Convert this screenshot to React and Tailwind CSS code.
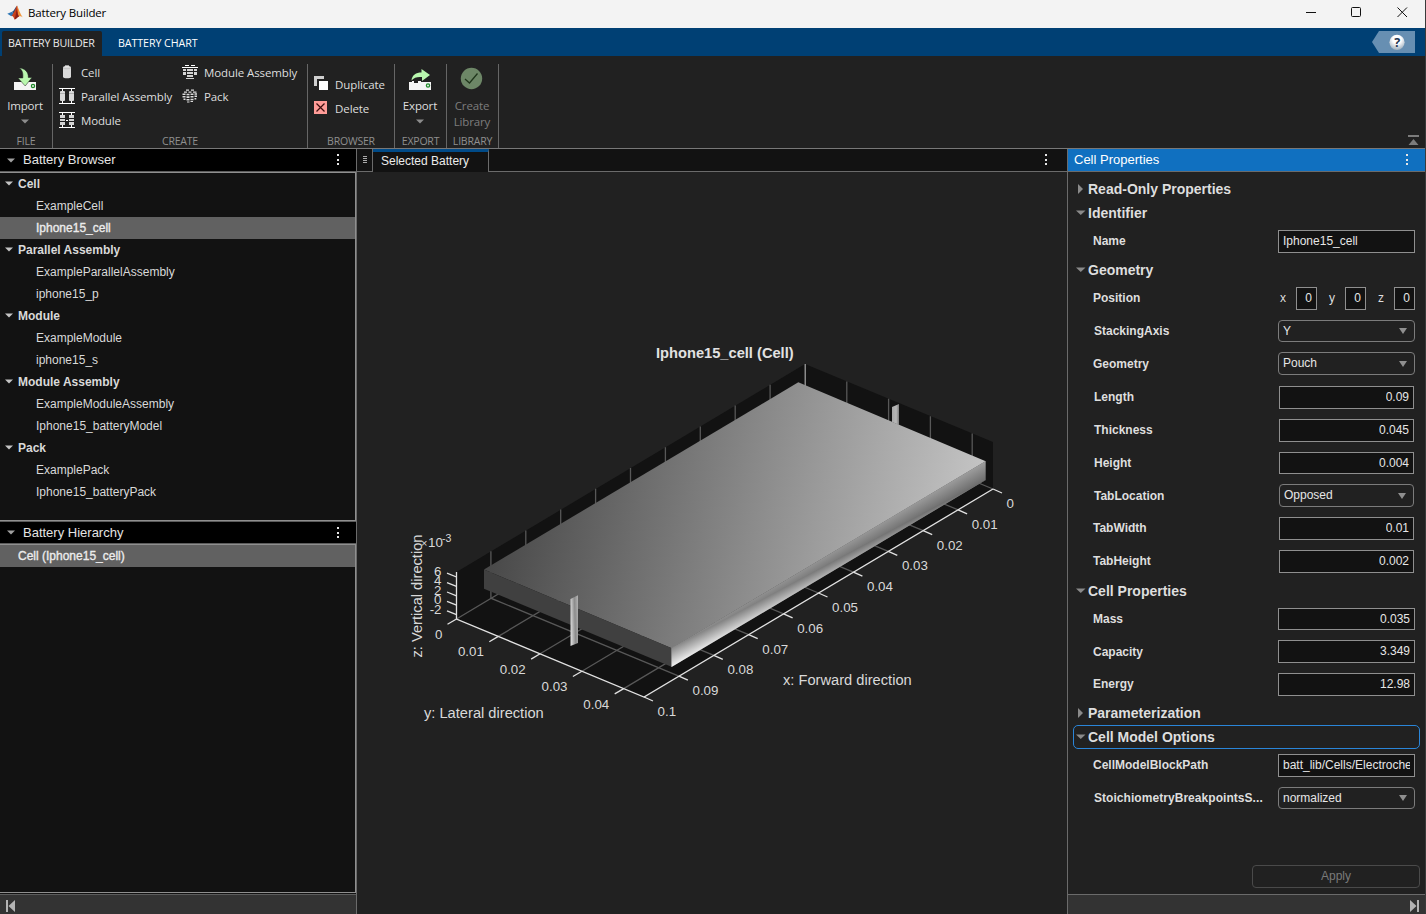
import React from "react";

const SEGOE = "font-['Open_Sans','Noto_Sans',sans-serif]";

function MatlabLogo() {
  return (
    <svg className="-mt-[2px] h-4 w-4" viewBox="0 0 16 16">
      <path d="M0.3 8.8 L5 6.7 L7.2 9.2 L4.3 11.2 Z" fill="#2f77b5" />
      <path d="M5 6.7 C7 6.2 7.6 3.6 9.8 0.8 L9 7 L7.2 9.2 Z" fill="#2a4d7c" />
      <path d="M10 0.4 C8.6 3 8.2 6 4.4 11.1 C6 10.6 6.6 12.4 7.6 14.6 C9.6 13.8 10.6 11.4 12 11.4 C11.4 8 11 2 10 0.4 Z" fill="#c8401c" />
      <path d="M10 0.4 C11.6 3.4 13 8.6 15.8 12.4 C14 11.2 13.2 11.2 12 11.6 C10.8 8.6 10.8 3.6 10 0.4 Z" fill="#f0953a" />
      <path d="M7.6 14.6 C8.4 11 9.2 8 9.6 3.4 C10 6.8 10.8 9.6 12 11.4 C10.4 11.8 9.4 13.8 7.6 14.6 Z" fill="#8c1f16" />
    </svg>
  );
}

function CellIcon() {
  return (
    <svg className="h-4 w-4" viewBox="0 0 16 16">
      <path d="M4 3.2 C4 1.6 12 1.6 12 3.2 V13 C12 14.8 4 14.8 4 13 Z" fill="#d9d9d9" />
      <path d="M6 1.400h4v1H6z" fill="#f4f4f4" />
      <path d="M4 4 C5 5 11 5 12 4" stroke="#b0b0b0" strokeWidth="0.6" fill="none" />
    </svg>
  );
}

function ParallelIcon() {
  return (
    <svg className="h-4 w-4" viewBox="0 0 16 16">
      <path d="M0 0h16v1H0zM0 15h16v1H0zM3 1h1v2H3zM12 1h1v2h-1zM3 13h1v2H3zM12 13h1v2h-1z" fill="#fff" />
      <rect x="1" y="3" width="5" height="10" rx="1" fill="#d9d9d9" />
      <rect x="10" y="3" width="5" height="10" rx="1" fill="#d9d9d9" />
      <path d="M1 5h5v.6H1zM10 5h5v.6h-5z" fill="#8a8a8a" />
    </svg>
  );
}

function ModuleIcon() {
  return (
    <svg className="h-4 w-4" viewBox="0 0 16 16">
      <path d="M0 0h16v1H0zM0 15h16v1H0zM3 1h1v2H3zM12 1h1v2h-1zM3 13h1v2H3zM12 13h1v2h-1zM7 8h2v1H7z" fill="#fff" />
      <path d="M1 3h5v3H1zM1 7h5v2H1zM1 10h5v3H1zM10 3h5v3h-5zM10 7h5v2h-5zM10 10h5v3h-5z" fill="#d4d4d4" />
    </svg>
  );
}

function ModuleAssemblyIcon() {
  return (
    <svg className="h-4 w-4" viewBox="0 0 16 16">
      <path d="M3 1h4v1H3zM9 1h4v1H9zM0 3h16v1H0z" fill="#fff" />
      <path d="M1 5h3v2H1zM1 8h3v3H1zM5 5h6v2H5zM5 8h6v2H5zM5 11h6v2H5zM12 5h3v2h-3zM12 8h3v3h-3z" fill="#d4d4d4" />
      <path d="M4 14h8v.8H4z" fill="#fff" />
    </svg>
  );
}

function PackIcon() {
  return (
    <svg className="h-4 w-4" viewBox="0 0 16 16">
      <path
        d="M4 1.500h3v1.200H4zM9 1.500h3v1.200H9zM2 3.500h3v1.200H2zM6.500 3.500h3v1.200h-3zM11 3.500h3.500v1.200H11zM0.500 5.500h3v1.600h-3zM4.500 5.700h3v1.600h-3zM8.500 5.500h3v1.600h-3zM12.500 5.200H15v1.500h-2.500zM0.500 8h3v1.600h-3zM4.500 8.300h3V10h-3zM8.500 8h3v1.600h-3zM12.500 7.600H15v1.500h-2.500zM1.500 10.500h2v1.500h-2zM4.500 11h3v1.600h-3zM8.500 10.700h3v1.500h-3zM12.500 10.100h1.800v1.300h-1.800zM5 13.400h2.500v1.100H5zM8.500 13.100h2.500v1H8.500z"
        fill="#dcdcdc"
      />
    </svg>
  );
}

function DuplicateIcon() {
  return (
    <svg className="h-4 w-4" viewBox="0 0 16 16" shapeRendering="crispEdges">
      <rect x="1" y="0" width="10" height="10" fill="#cfcfcf" />
      <rect x="4" y="3" width="11" height="11" fill="#212121" />
      <rect x="6" y="5" width="9" height="9" fill="#fff" />
    </svg>
  );
}

function DeleteIcon() {
  return (
    <svg className="h-4 w-4" viewBox="0 0 16 16">
      <rect x="1" y="1" width="13" height="13" fill="#ff9c98" />
      <path d="M3.500 3.500 L11.500 11.500 M11.500 3.500 L3.500 11.500" stroke="#3a0d0d" strokeWidth="1.200" />
    </svg>
  );
}

function ImportIcon() {
  return (
    <svg className="h-6 w-6" viewBox="0 0 24 24">
      <rect x="1" y="15" width="22" height="8" fill="#f4f4f4" />
      <circle cx="20" cy="19" r="1.600" fill="none" stroke="#1f8a2a" strokeWidth="1.300" />
      <path d="M6.500 1 C12 1.500 15.500 5 15.300 10.500 H19 L12.200 19 L5 11 H9.800 C10.200 6.500 9.600 3.500 6.500 1 Z" fill="#b9f7ae" stroke="#212121" strokeWidth="0.500" />
    </svg>
  );
}

function ExportIcon() {
  return (
    <svg className="h-6 w-6" viewBox="0 0 24 24">
      <path d="M1 15h3v-1h2v2h4v-2h3v1h10v8H1z" fill="#f4f4f4" />
      <circle cx="20" cy="18.500" r="1.600" fill="none" stroke="#1f8a2a" strokeWidth="1.300" />
      <path d="M3.500 13.500 C4 8 8 5.500 13.500 5.500 V2 L22 8 L14 14 V10 C9.500 9.500 6 10.500 3.500 13.500 Z" fill="#b9f7ae" />
    </svg>
  );
}

function Caret({ className = "text-[#8c8c8c]" }) {
  return (
    <svg className={`h-[5px] w-[8px] shrink-0 ${className}`} viewBox="0 0 8 5">
      <path d="M0 0.500H8L4 4.500Z" fill="currentColor" />
    </svg>
  );
}

function Dots({ className = "" }) {
  return (
    <svg className={`h-3 w-2 shrink-0 ${className}`} viewBox="0 0 8 12" shapeRendering="crispEdges">
      <path d="M3 0h2v2H3zM3 5h2v2H3zM3 9h2v2H3z" fill="#e6e6e6" />
    </svg>
  );
}

function TitleBar() {
  return (
    <div className="flex h-7 shrink-0 items-center bg-[#f3f3f3] pl-[7px]">
      <MatlabLogo />
      <span className={`-mt-[3px] ml-[5px] text-[11.5px] leading-4 tracking-[-0.15px] text-black ${SEGOE}`}>Battery Builder</span>
      <svg className="ml-auto mr-[17px] h-7 w-[102px] shrink-0" viewBox="0 0 102 28" fill="none" stroke="#111">
        <path d="M0 12.500H10" />
        <rect x="45.500" y="7.500" width="9" height="9" rx="1" />
        <path d="M91.500 7.500L101 17M101 7.500L91.500 17" />
      </svg>
    </div>
  );
}

function TabBar() {
  return (
    <div className={`flex h-7 shrink-0 items-end bg-[#004074] text-[10.7px] tracking-[-0.25px] ${SEGOE}`}>
      <div className="ml-[2px] flex h-[25px] w-[100px] items-center rounded-t-[2px] bg-[#212121] pl-[6px] text-[#ececec]">BATTERY BUILDER</div>
      <div className="flex h-[25px] items-center pl-[16px] tracking-[-0.08px] text-white">BATTERY CHART</div>
      <svg className="mb-[3px] ml-auto mr-[10px] h-[22px] w-[43px]" viewBox="0 0 43 22">
        <defs>
          <radialGradient id="help" cx="0.5" cy="0.3" r="0.7">
            <stop offset="0.4" stopColor="#fff" />
            <stop offset="1" stopColor="#9fb0bf" />
          </radialGradient>
        </defs>
        <path d="M0 11L7 0H43V22H7Z" fill="#678fb2" />
        <circle cx="25" cy="11.300" r="7.600" fill="url(#help)" />
        <text x="25" y="15.700" textAnchor="middle" fontSize="12.500" fontWeight="700" fill="#1f3550" fontFamily="Open Sans, sans-serif">?</text>
      </svg>
    </div>
  );
}

function Group({ label, width, children }) {
  return (
    <div className={`flex flex-col border-r border-[#666] ${width}`}>
      <div className="flex flex-1">{children}</div>
      <div className="h-[15px] text-center text-[10.5px] leading-[17px] tracking-[-0.2px] text-[#8f8f8f]">{label}</div>
    </div>
  );
}

function Tool({ icon, children }) {
  return (
    <div className="flex h-6 items-center whitespace-nowrap">
      {icon}
      <span className="ml-[6px] mt-[2px]">{children}</span>
    </div>
  );
}

function BigTool({ icon, label, caret, className = "" }) {
  return (
    <div className={`flex flex-1 flex-col items-center pt-[3px] ${className}`}>
      {icon}
      <span className="mt-[7px] text-center leading-4">{label}</span>
      {caret && <Caret className="mt-[5px] text-[#8c8c8c]" />}
    </div>
  );
}

function Ribbon() {
  return (
    <div className={`flex h-[93px] shrink-0 border-b border-[#787878] bg-[#212121] pt-2 text-[11.5px] tracking-[-0.15px] text-[#dedede] ${SEGOE}`}>
      <Group label="FILE" width="w-[53px]">
        <BigTool icon={<ImportIcon />} label="Import" caret className="-ml-[2px]" />
      </Group>
      <Group label="CREATE" width="w-[255px]">
        <div className="-mt-[4px] ml-[6px] w-[123px]">
          <Tool icon={<CellIcon />}>Cell</Tool>
          <Tool icon={<ParallelIcon />}>Parallel Assembly</Tool>
          <Tool icon={<ModuleIcon />}>Module</Tool>
        </div>
        <div className="-mt-[4px] tracking-[-0.1px]">
          <Tool icon={<ModuleAssemblyIcon />}>Module Assembly</Tool>
          <Tool icon={<PackIcon />}>Pack</Tool>
        </div>
      </Group>
      <Group label="BROWSER" width="w-[87px]">
        <div className="ml-[5px] mt-[8px] tracking-[-0.08px]">
          <Tool icon={<DuplicateIcon />}>Duplicate</Tool>
          <Tool icon={<DeleteIcon />}>Delete</Tool>
        </div>
      </Group>
      <Group label="EXPORT" width="w-[52px]">
        <BigTool icon={<ExportIcon />} label="Export" caret className="-ml-px" />
      </Group>
      <Group label="LIBRARY" width="w-[52px]">
        <BigTool
          className="-ml-px text-[#7d7d7d]"
          icon={
            <svg className="h-6 w-6 shrink-0" viewBox="0 0 24 24">
              <circle cx="11.500" cy="11.500" r="10.700" fill="#6d8767" />
              <path d="M5 12L9.500 16L17.500 6.500" stroke="#20361c" strokeWidth="1.300" fill="none" />
            </svg>
          }
          label={<>Create<br />Library</>}
        />
      </Group>
      <svg className="ml-auto mr-[6px] mt-[71px] h-[11px] w-[11px]" viewBox="0 0 11 11">
        <path d="M0 0h11v2H0zM5.500 4L10.500 10H0.500Z" fill="#7c7c7c" />
      </svg>
    </div>
  );
}

const TREE = [
  ["Cell", "ExampleCell", "Iphone15_cell"],
  ["Parallel Assembly", "ExampleParallelAssembly", "iphone15_p"],
  ["Module", "ExampleModule", "iphone15_s"],
  ["Module Assembly", "ExampleModuleAssembly", "Iphone15_batteryModel"],
  ["Pack", "ExamplePack", "Iphone15_batteryPack"],
];

function PaneHeader({ title }) {
  return (
    <div className="flex h-full items-center bg-black pl-[7px]">
      <Caret className="text-[#a0a0a0]" />
      <span className="ml-2 text-[13px] leading-[18px] text-[#e4e4e4]">{title}</span>
      <Dots className="ml-auto mr-[14px]" />
    </div>
  );
}

function LeftPane() {
  return (
    <div className="flex w-[357px] shrink-0 flex-col border-r border-[#6b6b6b] bg-[#121212] text-xs text-[#d9d9d9]">
      <div className="h-[23px] shrink-0 border-b border-[#5c5c5c]">
        <PaneHeader title="Battery Browser" />
      </div>
      <div className="h-[349px] shrink-0 border-b border-r border-t border-[#8f8f8f]">
        {TREE.map(([group, ...items]) => (
          <div key={group}>
            <div className="flex h-[22px] items-center pb-px pl-[5px] font-bold">
              <Caret className="text-[#c4c4c4]" />
              <span className="ml-[5px]">{group}</span>
            </div>
            {items.map((item) => (
              <div
                key={item}
                className={`flex h-[22px] items-center pb-px pl-9 ${item === "Iphone15_cell" ? "bg-[#616161] text-[#ececec] [-webkit-text-stroke:0.35px]" : ""}`}
              >
                {item}
              </div>
            ))}
          </div>
        ))}
      </div>
      <div className="h-[23px] shrink-0 border-b border-t border-[#5c5c5c]">
        <PaneHeader title="Battery Hierarchy" />
      </div>
      <div className="flex-1 border-b border-r border-t border-[#8f8f8f]">
        <div className="flex h-[22px] items-center bg-[#616161] pb-px pl-[18px] text-[#ececec] [-webkit-text-stroke:0.35px]">Cell (Iphone15_cell)</div>
      </div>
      <div className="mt-px flex h-5 shrink-0 items-center border-t border-[#5c5c5c] bg-[#333] pl-[6px]">
        <svg className="mt-[3px] h-3 w-[9px]" viewBox="0 0 9 12">
          <path d="M0 0h2v12H0zM9 0V12L2.500 6Z" fill="#b4b4b4" />
        </svg>
      </div>
    </div>
  );
}

const range = (n) => Array.from({ length: n }, (_, i) => i);

// Corner positions and per-tick steps of the axes box.
const LEFT = [456.500, 619];
const RIGHT = [993, 489];
const BACK = [805, 411];
const XS = [-34.9, 20.8];
const YS = [41.8, 17.400];

function Plot() {
  return (
    <svg className="h-full w-full" viewBox="357 172 710 742" fontFamily="Liberation Sans, Arial, sans-serif">
      <defs>
        <linearGradient id="top" gradientUnits="userSpaceOnUse" x1="484" y1="570" x2="947" y2="660.4">
          <stop offset="0" stopColor="#484848" />
          <stop offset="1" stopColor="#c4c4c4" />
        </linearGradient>
        <linearGradient id="sideA" gradientUnits="userSpaceOnUse" x1="669.01" y1="642.77" x2="676.98" y2="656.71">
          <stop offset="0" stopColor="#9c9c9c" />
          <stop offset="1" stopColor="#6c6c6c" />
        </linearGradient>
        <linearGradient id="sideB" gradientUnits="userSpaceOnUse" x1="669.8" y1="643.76" x2="679.76" y2="662.98">
          <stop offset="0" stopColor="#6c6c6c" />
          <stop offset="1" stopColor="#f4f4f4" />
        </linearGradient>
        <linearGradient id="tab" x1="0" y1="0.6" x2="1" y2="0.4">
          <stop offset="0" stopColor="#dcdcdc" />
          <stop offset="0.6" stopColor="#8c8c8c" />
          <stop offset="1" stopColor="#adadad" />
        </linearGradient>
        <linearGradient id="backTab" x1="0" y1="0" x2="1" y2="0">
          <stop offset="0" stopColor="#a8a8a8" />
          <stop offset="0.6" stopColor="#b8b8b8" />
          <stop offset="1" stopColor="#7c7c7c" />
        </linearGradient>
      </defs>

      <path d="M456.500 572L805 364L993 442V489L644 697L456.500 619Z" fill="#121212" />
      <g stroke="#585858" strokeWidth="1.300" fill="none">
        {range(10).map((k) => {
          const x = BACK[0] + XS[0] * k;
          const y = BACK[1] + XS[1] * k;
          return <path key={k} d={`M${x} ${y - 47}V${y}L${x + 188} ${y + 78}`} />;
        })}
        {range(5).map((k) => {
          const x = BACK[0] + YS[0] * k;
          const y = BACK[1] + YS[1] * k;
          return <path key={k} d={`M${x} ${y - 47}V${y}L${x - 348.5} ${y + 208}`} />;
        })}
      </g>
      <path d="M805.500 364V390" stroke="#8a8a8a" />
      <path d="M892 407L899 404V425L892 422Z" fill="url(#backTab)" />

      <path d="M484 569.500L798.300 382.300L985.700 461.300L671.700 648.300Z" fill="url(#top)" />
      <path d="M484 569.500L672 648.300V667L484 588.700Z" fill="#404040" />
      <path d="M671.500 648L985.700 461V480L671.500 667Z" fill="url(#sideA)" />
      <path d="M671.500 648L985.700 479.700V480L671.500 667Z" fill="url(#sideB)" />
      <path d="M570.500 599L578 595.300V643L570.500 646Z" fill="url(#tab)" />

      <g stroke="#e2e2e2" strokeWidth="1.300" fill="none">
        <path d="M456.500 572V619L644 697L993 489" />
        {range(5).map((k) => (
          <path key={k} d={`M${LEFT[0] + YS[0] * k} ${LEFT[1] + YS[1] * k}l-9 5.300`} />
        ))}
        {range(11).map((k) => (
          <path key={k} d={`M${RIGHT[0] + XS[0] * k} ${RIGHT[1] + XS[1] * k}l9 4`} />
        ))}
        {range(5).map((k) => (
          <path key={k} d={`M456.500 ${577 + 9.400 * k}l-9.500 -3.800`} />
        ))}
      </g>

      <g fill="#d9d9d9" fontSize="13.33">
        {range(5).map((k) => (
          <text key={k} x={(k ? 442.1 : 442.5) + YS[0] * k} y={638.9 + YS[1] * k} textAnchor="end">
            {["0", "0.01", "0.02", "0.03", "0.04"][k]}
          </text>
        ))}
        {["0", "0.01", "0.02", "0.03", "0.04", "0.05", "0.06", "0.07", "0.08", "0.09", "0.1"].map((t, k) => (
          <text key={t} x={1006.6 + XS[0] * k} y={507.9 + XS[1] * k}>{t}</text>
        ))}
        {["6", "4", "2", "0", "-2"].map((t, k) => (
          <text key={t} x="441.500" y={575.600 + 9.500 * k} textAnchor="end">{t}</text>
        ))}
        <text x="421" y="547">
          <tspan fontSize="11">×</tspan>
          <tspan x="428">10</tspan>
          <tspan x="442" y="542" fontSize="10.600">-3</tspan>
        </text>
      </g>
      <g fill="#d9d9d9" fontSize="14.67">
        <text x="424" y="718">y: Lateral direction</text>
        <text x="783" y="685">x: Forward direction</text>
        <text transform="translate(422 657.500) rotate(-90)">z: Vertical direction</text>
        <text x="656" y="358" fontWeight="700" fill="#e2e2e2">Iphone15_cell (Cell)</text>
      </g>
    </svg>
  );
}

function CenterPane() {
  return (
    <div className="flex min-w-0 flex-1 flex-col bg-[#212121]">
      <div className="flex h-[23px] shrink-0 bg-[#121212]">
        <div className="flex w-4 items-center justify-center border-b border-r border-[#6b6b6b]">
          <svg className="h-2 w-1" viewBox="0 0 4 8" shapeRendering="crispEdges">
            <path d="M0 0h4v1H0zM0 2h4v1H0zM0 4h4v1H0zM0 6h4v1H0z" fill="#a8a8a8" />
          </svg>
        </div>
        <div className="flex w-[116px] items-center border-r border-t-3 border-r-[#6b6b6b] border-t-[#004a87] pb-[2px] pl-2 text-xs text-[#ececec]">Selected Battery</div>
        <div className="flex flex-1 items-center justify-end border-b border-[#6b6b6b] pr-[17px]">
          <Dots />
        </div>
      </div>
      <div className="min-h-0 flex-1">
        <Plot />
      </div>
    </div>
  );
}

function Section({ title, open, className = "h-6" }) {
  return (
    <div className={`flex shrink-0 items-center text-sm font-bold text-[#dedede] ${className}`}>
      <div className="flex w-[15px] shrink-0 pl-[3px]">
        <svg className="h-[10px] w-[10px]" viewBox="0 0 10 10">
          <path d={open ? "M0 2.500H9.500L4.750 7Z" : "M2 0V10L7 5Z"} fill="#8a8a8a" />
        </svg>
      </div>
      <span>{title}</span>
    </div>
  );
}

function Field({ label, row = "h-[33px] pt-[5px]", lead = "leading-[22px]", children }) {
  return (
    <div className={`flex shrink-0 items-start pl-5 pr-[5px] ${row}`}>
      <span className={`w-[185px] whitespace-nowrap font-bold ${lead}`}>{label}</span>
      {children}
    </div>
  );
}

function Box({ children, className = "h-[23px] w-[137px]", right }) {
  return (
    <div className={`flex items-center overflow-hidden whitespace-nowrap border border-[#8f8f8f] bg-[#121212] px-1 pb-px text-[#e6e6e6] ${right ? "justify-end" : ""} ${className}`}>
      <span className="overflow-hidden leading-5">{children}</span>
    </div>
  );
}

function Select({ children, className = "h-[23px] w-[137px]" }) {
  return (
    <div className={`flex items-center justify-between rounded-[4px] border border-[#7c7c7c] pl-1 pr-[7px] text-[#e6e6e6] ${className}`}>
      <span className="-mt-px">{children}</span>
      <svg className="h-[6px] w-[8px]" viewBox="0 0 8 6">
        <path d="M0 0H8L4 6Z" fill="#8f8f8f" />
      </svg>
    </div>
  );
}

const NARROW = "ml-px h-[23px] w-[135px]";

function RightPane() {
  return (
    <div className="flex w-[358px] shrink-0 flex-col border-l border-[#6b6b6b] bg-[#212121] text-xs text-[#dedede]">
      <div className="flex h-[23px] shrink-0 items-center border-b border-[#6b6b6b] bg-[#1070c0] pl-[6px] text-[13px] text-white">
        Cell Properties
        <Dots className="ml-auto mr-[14px]" />
      </div>
      <div className="flex flex-1 flex-col px-[5px] pt-[5px]">
        <Section title="Read-Only Properties" />
        <Section title="Identifier" open />
        <Field label="Name" row="h-8 pt-[5px]"><Box>Iphone15_cell</Box></Field>
        <Section title="Geometry" open className="h-[26px]" />
        <Field label="Position" row="h-[31px] pt-[4px]">
          <div className="flex w-[137px] justify-between leading-[22px]">
            {["x", "y", "z"].map((axis) => (
              <div key={axis} className="flex">
                <span className={axis === "x" ? "w-[18px] pl-[2px]" : "w-[16px]"}>{axis}</span>
                <Box right className="h-[23px] w-[21px]">0</Box>
              </div>
            ))}
          </div>
        </Field>
        <Field label={<span className="ml-px">StackingAxis</span>} row="h-[33px] pt-[6px]"><Select className="h-[22px] w-[137px]">Y</Select></Field>
        <Field label="Geometry" lead="leading-[24px]"><Select>Pouch</Select></Field>
        <Field label={<span className="ml-px">Length</span>} row="h-[33px] pt-[6px]"><Box right className={NARROW}>0.09</Box></Field>
        <Field label={<span className="ml-px">Thickness</span>} row="h-[33px] pt-[6px]"><Box right className={NARROW}>0.045</Box></Field>
        <Field label={<span className="ml-px">Height</span>} row="h-[33px] pt-[6px]"><Box right className="ml-px h-[22px] w-[135px]">0.004</Box></Field>
        <Field label={<span className="ml-px">TabLocation</span>} lead="leading-[24px]"><Select className={NARROW}>Opposed</Select></Field>
        <Field label="TabWidth"><Box right className={NARROW}>0.01</Box></Field>
        <Field label="TabHeight"><Box right className={NARROW}>0.002</Box></Field>
        <Section title="Cell Properties" open className="h-[26px]" />
        <Field label="Mass" row="h-[31px] pt-[4px]"><Box right className="h-[22px] w-[137px]">0.035</Box></Field>
        <Field label="Capacity" lead="leading-[24px]"><Box right>3.349</Box></Field>
        <Field label="Energy"><Box right>12.98</Box></Field>
        <Section title="Parameterization" />
        <div className="h-6 rounded-[5px] outline outline-1 -outline-offset-1 outline-[#2a85d8]">
          <Section title="Cell Model Options" open />
        </div>
        <Field label="CellModelBlockPath" row="h-8 pt-[5px]"><Box>batt_lib/Cells/Electroche</Box></Field>
        <Field label={<span className="ml-px tracking-[0.05px]">StoichiometryBreakpointsS...</span>} row="h-[33px] pt-[6px]"><Select className="h-[22px] w-[137px]">normalized</Select></Field>
        <div className="mb-[6px] mt-auto flex h-[23px] w-[168px] items-center justify-center self-end rounded-[4px] border border-[#4a4a4a] pb-px text-[#7a7a7a]">Apply</div>
      </div>
      <div className="flex h-5 shrink-0 items-center justify-end border-t border-[#6b6b6b] bg-[#333] pr-[6px]">
        <svg className="mt-[3px] h-3 w-[9px]" viewBox="0 0 9 12">
          <path d="M7 0h2v12H7zM0 0V12L6.500 6Z" fill="#b4b4b4" />
        </svg>
      </div>
    </div>
  );
}

export default function App() {
  return (
    <div className="flex h-[914px] w-[1426px] flex-col overflow-hidden border-r border-[#3a3a3a] bg-[#212121] font-['Liberation_Sans',Arial,sans-serif]">
      <TitleBar />
      <TabBar />
      <Ribbon />
      <div className="flex min-h-0 flex-1">
        <LeftPane />
        <CenterPane />
        <RightPane />
      </div>
    </div>
  );
}
